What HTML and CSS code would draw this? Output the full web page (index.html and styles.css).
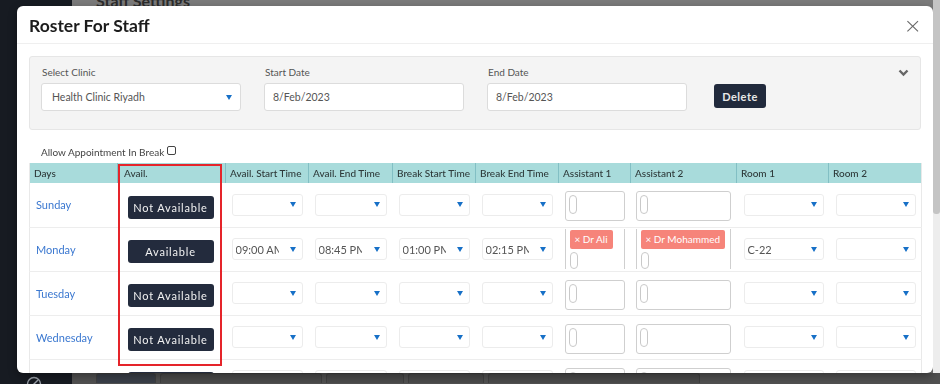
FILE: index.html
```html
<!DOCTYPE html>
<html lang="en">
<head>
  <meta charset="UTF-8">
  <meta name="viewport" content="width=device-width, initial-scale=1.0">
  <title>Roster For Staff</title>
  <link rel="stylesheet" href="styles.css">
</head>
<body>
  <div class="sidebar">
    <svg class="side-icon" width="16" height="16" viewBox="0 0 16 16"><circle cx="8" cy="8" r="6.5" fill="none" stroke="#9aa0a8" stroke-width="1.4"/><path d="M12 4 L4 12" stroke="#9aa0a8" stroke-width="1.4"/></svg>
  </div>
  <div class="main">
    <div class="page-title">Staff Settings</div>
    <div class="page-foot">
      <span class="ghost g1"></span><span class="ghost g2"></span><span class="ghost g3"></span><span class="ghost g4"></span><span class="ghost g5"></span>
    </div>
  </div>

  <div class="modal">
    <div class="modal-head">
      <h2>Roster For Staff</h2>
      <span class="close">&times;</span>
    </div>
    <div class="modal-body">
      <div class="filters">
        <div class="field">
          <label>Select Clinic</label>
          <div class="sel sel-big"><span>Health Clinic Riyadh</span><i class="caret"></i></div>
        </div>
        <div class="field">
          <label>Start Date</label>
          <input class="inp" type="text" value="8/Feb/2023" readonly>
        </div>
        <div class="field">
          <label>End Date</label>
          <input class="inp" type="text" value="8/Feb/2023" readonly>
        </div>
        <button class="btn-delete">Delete</button>
        <svg class="chev" width="11" height="8" viewBox="0 0 11 8"><path d="M1.5 1.5 L5.5 5.5 L9.5 1.5" fill="none" stroke="#666" stroke-width="2.4"/></svg>
      </div>

      <div class="allow">Allow Appointment In Break <input type="checkbox" class="chk"></div>

      <table class="roster">
        <colgroup>
          <col style="width:88px"><col style="width:108px"><col style="width:83px"><col style="width:84px"><col style="width:83px">
          <col style="width:83px"><col style="width:72px"><col style="width:106px"><col style="width:92px"><col style="width:93px">
        </colgroup>
        <thead>
          <tr>
            <th>Days</th><th class="th-av">Avail.</th><th>Avail. Start Time</th><th>Avail. End Time</th><th>Break Start Time</th>
            <th>Break End Time</th><th>Assistant 1</th><th>Assistant 2</th><th>Room 1</th><th>Room 2</th>
          </tr>
        </thead>
        <tbody>
          <tr>
            <td class="day">Sunday</td>
            <td class="av"><button class="btn-av">Not Available</button></td>
            <td><div class="sel"><span></span><i class="caret"></i></div></td>
            <td><div class="sel"><span></span><i class="caret"></i></div></td>
            <td><div class="sel"><span></span><i class="caret"></i></div></td>
            <td><div class="sel"><span></span><i class="caret"></i></div></td>
            <td><div class="multi"><i class="pill"></i></div></td>
            <td class="a2"><div class="multi"><i class="pill"></i></div></td>
            <td class="room"><div class="sel"><span></span><i class="caret"></i></div></td>
            <td class="room"><div class="sel"><span></span><i class="caret"></i></div></td>
          </tr>
          <tr>
            <td class="day">Monday</td>
            <td class="av"><button class="btn-av">Available</button></td>
            <td><div class="sel"><span>09:00 AM</span><i class="caret"></i></div></td>
            <td><div class="sel"><span>08:45 PM</span><i class="caret"></i></div></td>
            <td><div class="sel"><span>01:00 PM</span><i class="caret"></i></div></td>
            <td><div class="sel"><span>02:15 PM</span><i class="caret"></i></div></td>
            <td><div class="multi open"><span class="tag">&times; Dr Ali</span><i class="pill"></i></div></td>
            <td class="a2"><div class="multi open"><span class="tag">&times; Dr Mohammed</span><i class="pill"></i></div></td>
            <td class="room"><div class="sel"><span>C-22</span><i class="caret"></i></div></td>
            <td class="room"><div class="sel"><span></span><i class="caret"></i></div></td>
          </tr>
          <tr>
            <td class="day">Tuesday</td>
            <td class="av"><button class="btn-av">Not Available</button></td>
            <td><div class="sel"><span></span><i class="caret"></i></div></td>
            <td><div class="sel"><span></span><i class="caret"></i></div></td>
            <td><div class="sel"><span></span><i class="caret"></i></div></td>
            <td><div class="sel"><span></span><i class="caret"></i></div></td>
            <td><div class="multi"><i class="pill"></i></div></td>
            <td class="a2"><div class="multi"><i class="pill"></i></div></td>
            <td class="room"><div class="sel"><span></span><i class="caret"></i></div></td>
            <td class="room"><div class="sel"><span></span><i class="caret"></i></div></td>
          </tr>
          <tr>
            <td class="day">Wednesday</td>
            <td class="av"><button class="btn-av">Not Available</button></td>
            <td><div class="sel"><span></span><i class="caret"></i></div></td>
            <td><div class="sel"><span></span><i class="caret"></i></div></td>
            <td><div class="sel"><span></span><i class="caret"></i></div></td>
            <td><div class="sel"><span></span><i class="caret"></i></div></td>
            <td><div class="multi"><i class="pill"></i></div></td>
            <td class="a2"><div class="multi"><i class="pill"></i></div></td>
            <td class="room"><div class="sel"><span></span><i class="caret"></i></div></td>
            <td class="room"><div class="sel"><span></span><i class="caret"></i></div></td>
          </tr>
          <tr>
            <td class="day">Thursday</td>
            <td class="av"><button class="btn-av">Not Available</button></td>
            <td><div class="sel"><span></span><i class="caret"></i></div></td>
            <td><div class="sel"><span></span><i class="caret"></i></div></td>
            <td><div class="sel"><span></span><i class="caret"></i></div></td>
            <td><div class="sel"><span></span><i class="caret"></i></div></td>
            <td><div class="multi"><i class="pill"></i></div></td>
            <td class="a2"><div class="multi"><i class="pill"></i></div></td>
            <td class="room"><div class="sel"><span></span><i class="caret"></i></div></td>
            <td class="room"><div class="sel"><span></span><i class="caret"></i></div></td>
          </tr>
        </tbody>
      </table>
    </div>
  </div>

  <div class="scrollbar"><div class="thumb"></div></div>
  <div class="highlight"></div>
</body>
</html>
```

FILE: styles.css
```css
body {
  margin: 0;
  height: 384px;
  overflow: hidden;
  display: flex;
  font-family: Lato, "Open Sans", sans-serif;
  background: #6f6f6f;
}

/* background page (dimmed) */
.sidebar {
  width: 72px;
  background: #171b22;
  display: flex;
  flex-direction: column;
  justify-content: flex-end;
  align-items: center;
}

.side-icon {
  margin-bottom: -8px;
  margin-left: -4px;
}

.main {
  flex: 1;
  background: #7b7b7b;
  display: flex;
  flex-direction: column;
  justify-content: space-between;
}

.page-title {
  margin: -9px 0 0 24px;
  font-size: 16px;
  font-weight: 700;
  color: #2c2c2c;
  border-bottom: 2px solid #5a5a5a;
  padding-bottom: 1px;
}

.page-foot {
  height: 11px;
  background: #505050;
  display: flex;
  gap: 4px;
  padding-left: 24px;
}

.ghost {
  height: 9px;
  border: 1px solid #3f3f3f;
  border-bottom: 0;
  border-radius: 3px 3px 0 0;
  background: #4a4a4a;
}
.g1 { width: 58px; background: #3a3f48; }
.g2 { width: 160px; }
.g3 { width: 76px; }
.g4 { width: 74px; }
.g5 { width: 210px; }

/* modal */
.modal {
  position: fixed;
  top: 6px;
  left: 17px;
  width: 916px;
  height: 367px;
  background: #fff;
  border-radius: 6px;
  overflow: hidden;
  box-shadow: 0 3px 8px rgba(0, 0, 0, 0.35);
}

.modal-head {
  height: 37px;
  border-bottom: 1px solid #efefef;
  display: flex;
  align-items: center;
  justify-content: space-between;
  padding: 0 12px;
}

.modal-head h2 {
  margin: 0;
  font-size: 17.5px;
  font-weight: 700;
  color: #1c1c1c;
  padding-top: 2px;
}

.close {
  font-size: 22px;
  color: #6a6a6a;
  font-family: "DejaVu Sans", sans-serif;
  font-weight: 300;
  margin-right: -1px;
  padding-top: 2px;
}

.modal-body {
  padding: 12px 12px 0;
}

.filters {
  background: #f4f4f4;
  border: 1px solid #e6e6e6;
  border-radius: 3px;
  box-sizing: border-box;
  height: 74px;
  display: flex;
  align-items: flex-start;
  padding: 9px 11px 0;
  gap: 23px;
  position: relative;
}

.field {
  display: flex;
  flex-direction: column;
  gap: 5px;
}

.field label {
  font-size: 10px;
  color: #555;
  line-height: 12px;
  padding-left: 1px;
}

.sel {
  display: flex;
  align-items: center;
  justify-content: space-between;
  box-sizing: border-box;
  height: 22px;
  background: #fff;
  border: 1px solid #ececec;
  border-radius: 3px;
  padding: 0 6px 0 3px;
  font-size: 11px;
  color: #555;
}

.sel span {
  overflow: hidden;
  white-space: nowrap;
  width: 43px;
}

.sel-big {
  width: 200px;
  height: 28px;
  border-color: #dcdcdc;
  padding: 0 8px 0 10px;
  font-size: 10.5px;
}
.sel-big span { width: auto; }

.caret {
  width: 0;
  height: 0;
  border-left: 3.5px solid transparent;
  border-right: 3.5px solid transparent;
  border-top: 5px solid #1770c7;
}

.inp {
  width: 200px;
  height: 28px;
  box-sizing: border-box;
  border: 1px solid #dcdcdc;
  border-radius: 3px;
  padding: 0 8px;
  font-family: inherit;
  font-size: 10.5px;
  color: #555;
  background: #fff;
  outline: none;
}

.btn-delete {
  margin: 18px 0 0 4px;
  width: 52px;
  height: 24px;
  background: #212a3c;
  color: #e8e8e8;
  border: 0;
  border-radius: 3px;
  font-family: inherit;
  font-weight: 700;
  font-size: 11px;
  letter-spacing: 0.5px;
}

.chev {
  position: absolute;
  top: 12px;
  right: 11px;
}

.allow {
  margin: 16px 0 5px 12px;
  font-size: 10px;
  color: #444;
  display: flex;
  align-items: center;
  gap: 3px;
  height: 12px;
}

.chk {
  appearance: none;
  width: 9px;
  height: 9px;
  margin: 0 0 3px;
  border: 1px solid #444;
  border-radius: 2px;
  background: #fff;
}

/* roster table */
.roster {
  width: 892px;
  table-layout: fixed;
  border-collapse: collapse;
  border-left: 1px solid #e9e9e9;
  border-right: 1px solid #e9e9e9;
}

.roster th {
  background: #a8dbdb;
  height: 20px;
  padding: 0 4px;
  font-size: 10px;
  font-weight: 500;
  color: #2e3a3a;
  text-align: left;
  border-right: 1px solid #82bfc4;
  white-space: nowrap;
}
.roster th:last-child { border-right: 0; }
.roster th.th-av { padding-left: 6px; }

.roster td {
  height: 43px;
  box-sizing: border-box;
  padding: 0 6px;
  border-bottom: 1px solid #ededed;
  vertical-align: middle;
}

.roster tbody tr { height: 44px; }

.roster td.day {
  font-size: 11px;
  color: #3b78d0;
  padding-left: 6px;
}

.roster td.av { padding-left: 10px; }
.roster td.a2 { padding-left: 5px; }
.roster td.room { padding-left: 7px; padding-right: 5px; }

.btn-av {
  display: block;
  width: 86px;
  height: 23px;
  margin-top: 5px;
  background: #232b3d;
  color: #f2f2f2;
  border: 0;
  border-radius: 3px;
  font-family: inherit;
  font-size: 11px;
  letter-spacing: 0.8px;
  white-space: nowrap;
  padding: 0;
}

.multi {
  height: 30px;
  margin-top: 3px;
  box-sizing: border-box;
  border: 1px solid #cfcfcf;
  border-radius: 3px;
  padding: 3px 3px;
  display: flex;
  flex-direction: column;
  align-items: flex-start;
}

.multi.open {
  height: 40px;
  margin: 0;
  border-top: 0;
  border-bottom: 0;
  border-radius: 0;
  padding: 1px 4px 0;
  gap: 3px;
  overflow: hidden;
}

.pill {
  display: block;
  width: 6px;
  height: 17px;
  border: 1px solid #c9c9c9;
  border-radius: 4px;
}

.tag {
  background: #f6847a;
  color: #fff;
  font-size: 10px;
  line-height: 19px;
  padding: 0 5px;
  border-radius: 2px;
  white-space: nowrap;
}

/* overlays */
.scrollbar {
  position: fixed;
  top: 0;
  right: 0;
  width: 7px;
  height: 373px;
  background: #ededed;
}

.thumb {
  height: 214px;
  background: #c4c4c4;
  border-radius: 0 0 3px 3px;
}

.highlight {
  position: fixed;
  left: 118px;
  top: 164px;
  width: 100px;
  height: 198px;
  border: 2px solid #e5242a;
}
```
